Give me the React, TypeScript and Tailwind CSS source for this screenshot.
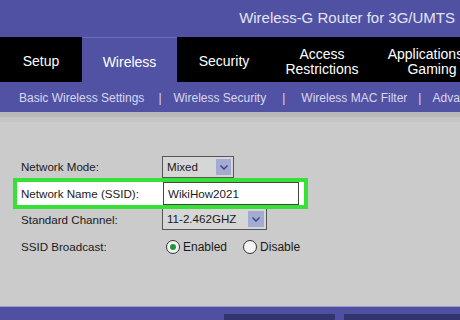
import React from "react";

const F = { fontFamily: '"Liberation Sans", Arial, sans-serif' };

function Chevron() {
  return (
    <svg width="10" height="7" viewBox="0 0 10 7">
      <path d="M1.5 1.5 L5 5 L8.5 1.5" fill="none" stroke="#3a3f80" strokeWidth="1.4" />
    </svg>
  );
}

function Radio({ on }: { on?: boolean }) {
  return (
    <span className="w-[14px] h-[14px] rounded-full border border-[#333] bg-[#f4f4f4] flex items-center justify-center">
      {on && <span className="w-[6px] h-[6px] rounded-full bg-[#1a9a3a]" />}
    </span>
  );
}

export default function App() {
  return (
    <div className="w-[460px] h-[320px] overflow-hidden bg-[#cbcbcb] flex flex-col" style={F}>
      {/* Title */}
      <div className="h-[37px] shrink-0 bg-[#5151a3] flex items-center justify-end pr-[5px] text-[15px] text-[#e4e4f2]">
        Wireless-G Router for 3G/UMTS
      </div>
      {/* Tabs */}
      <div className="h-[45px] shrink-0 bg-black flex text-white text-[14px] leading-[15px] whitespace-nowrap pt-[4px]">
        <div className="w-[82px] shrink-0 flex items-center justify-center">Setup</div>
        <div className="w-[95px] shrink-0 -mt-[4px] bg-[#5252a4] border-t border-[#6a6ab8] flex items-center justify-center pt-[4px]">Wireless</div>
        <div className="w-[94px] shrink-0 flex items-center justify-center">Security</div>
        <div className="w-[102px] shrink-0 flex flex-col items-center justify-center text-center">
          <span>Access</span>
          <span>Restrictions</span>
        </div>
        <div className="w-[118px] shrink-0 flex flex-col items-center justify-center text-center">
          <span>Applications &amp;</span>
          <span>Gaming</span>
        </div>
      </div>
      {/* Sub nav */}
      <div className="h-[30px] shrink-0 bg-[#5252a4] flex items-center text-[12px] text-[#d8d8f0] whitespace-nowrap pl-[19px] pt-[2px] overflow-hidden">
        <span className="shrink-0">Basic Wireless Settings</span>
        <span className="shrink-0 ml-[14px]">|</span>
        <span className="shrink-0 ml-[12px]">Wireless Security</span>
        <span className="shrink-0 ml-[16px]">|</span>
        <span className="shrink-0 ml-[16px]">Wireless MAC Filter</span>
        <span className="shrink-0 ml-[11px]">|</span>
        <span className="shrink-0 ml-[11px]">Advanced Wireless Settings</span>
      </div>
      <div className="h-[5px] shrink-0 bg-[#b9b9b9]" />
      <div className="h-[5px] shrink-0 bg-[#c5c5c5]" />
      {/* Content */}
      <div className="flex-1 flex flex-col text-[11.6px] text-[#1a1a1a] pt-[34px]">
        <div className="flex items-center h-[22px]">
          <span className="w-[162px] pl-[21px]">Network Mode:</span>
          <div className="w-[72px] h-[22px] border border-[#555] bg-[#d6d6d6] flex items-center pl-[4px] pr-[2px] justify-between">
            <span>Mixed</span>
            <span className="w-[15px] h-[16px] bg-[#a4abd3] flex items-center justify-center"><Chevron /></span>
          </div>
        </div>
        <div className="ml-[13px] w-[295px] h-[31px] border-[4px] border-[#37e037] bg-white flex items-center">
          <span className="w-[146px] pl-[4px]">Network Name (SSID):</span>
          <div className="w-[136px] h-[23px] border border-[#444] bg-white flex items-center pl-[4px]">WikiHow2021</div>
        </div>
        <div className="flex items-center h-[21px]">
          <span className="w-[162px] pl-[21px] pt-[1px]">Standard Channel:</span>
          <div className="w-[105px] h-[21px] border border-[#555] border-t-0 bg-[#d6d6d6] flex items-center pl-[4px] pr-[2px] justify-between">
            <span>11-2.462GHZ</span>
            <span className="w-[16px] h-[16px] bg-[#a4abd3] flex items-center justify-center"><Chevron /></span>
          </div>
        </div>
        <div className="flex items-center h-[28px] pt-[5px]">
          <span className="w-[166px] pl-[21px]">SSID Broadcast:</span>
          <Radio on />
          <span className="ml-[3px] text-[12px]">Enabled</span>
          <span className="ml-[16px]"><Radio /></span>
          <span className="ml-[3px] text-[12px]">Disable</span>
        </div>
        <div className="flex-1" />
      </div>
      {/* Bottom bar */}
      <div className="h-[1px] shrink-0 bg-[#9a9ad0]" />
      <div className="h-[13px] shrink-0 bg-[#5050a2] flex items-end">
        <div className="ml-[224px] w-[111px] h-[6px] bg-[#33336e]" />
        <div className="ml-[9px] w-[116px] h-[6px] bg-[#33336e]" />
      </div>
    </div>
  );
}
